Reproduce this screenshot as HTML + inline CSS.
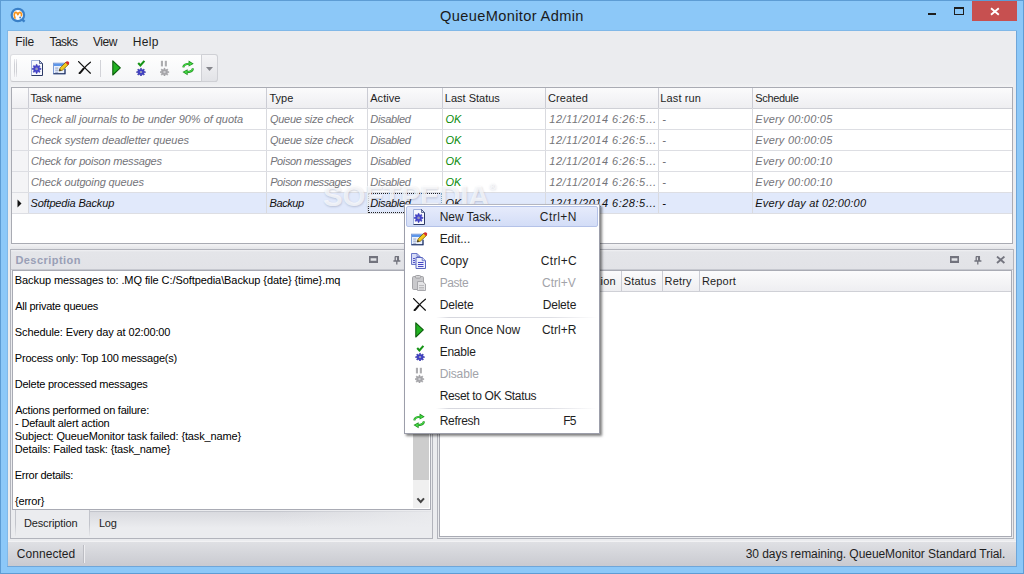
<!DOCTYPE html>
<html><head><meta charset="utf-8"><title>QueueMonitor Admin</title>
<style>
*{box-sizing:border-box;margin:0;padding:0}
html,body{width:1024px;height:574px;overflow:hidden}
body{background:#8cc8f8;font-family:"Liberation Sans",sans-serif;font-size:12px;color:#1e1e1e;position:relative}
.abs{position:absolute}
.t{position:absolute;white-space:nowrap}
.vl{position:absolute;width:1px;background:#d9dadf}
.hl{position:absolute;height:1px;background:#dddee3}
.hdr{background:linear-gradient(#fbfbfc,#eeeef1)}
</style></head><body>
<div class="abs" style="left:0px;top:0px;width:1024px;height:574px;border:1px solid #5d9cd4"></div>
<div class="abs" style="left:8px;top:31px;width:1008px;height:535px;background:#ebecef"></div>
<div class="abs" style="left:1016px;top:31px;width:1px;height:536px;background:#6fa6d9"></div>
<div class="abs" style="left:7px;top:31px;width:1px;height:536px;background:#80b8e8"></div>
<div class="abs" style="left:7px;top:566px;width:1010px;height:1px;background:#6fa6d9"></div>
<div class="abs" style="left:7px;top:30px;width:1010px;height:1px;background:#80b8e8"></div>
<div class="abs" style="left:972px;top:1px;width:45px;height:20px;background:#c75050"></div>
<svg class="abs" style="left:990px;top:7px" width="10" height="9" viewBox="0 0 10 9"><path d="M1,1.2 L8.8,7.8 M8.8,1.2 L1,7.8" stroke="#fff" stroke-width="1.9" fill="none"/></svg>
<div class="abs" style="left:954px;top:7px;width:10px;height:8px;border:1px solid #1e1e1e;border-top-width:2px"></div>
<div class="abs" style="left:928px;top:13px;width:8px;height:2px;background:#1e1e1e"></div>
<svg class="abs" style="left:10px;top:7px" width="17" height="17" viewBox="0 0 17 17"><path d="M11.5,12 L14.6,14.6" stroke="#3a80c8" stroke-width="2.4"/><circle cx="7.9" cy="8" r="6.2" fill="#fdfdfe" stroke="#3a80c8" stroke-width="2.2"/><path d="M5,11 Q3.6,8 4.6,6.2 Q5.6,4.6 7,5.8 L7.9,7.6 L8.8,5.8 Q10.2,4.6 11.2,6.2 Q11.8,7.4 11.4,8.6" stroke="#f7941d" stroke-width="1.7" fill="none" stroke-linecap="round" stroke-linejoin="round"/><circle cx="10.2" cy="10.4" r="1" fill="#3a80c8"/></svg>
<div class="abs" style="left:10px;top:54px;width:208px;height:28px;border:1px solid #dcdde1;border-bottom-color:#c9cace;border-radius:3px;background:linear-gradient(#fefefe,#f5f6f8)"></div>
<div class="abs" style="left:201px;top:54px;width:17px;height:28px;border:1px solid #cfd0d5;border-radius:0 3px 3px 0;background:linear-gradient(#f4f4f6,#e2e3e7)"></div>
<div class="abs" style="left:14px;top:59px;width:1px;height:18px;background:linear-gradient(#e8e8ec,#cfd0d5 30%,#cfd0d5 70%,#e8e8ec)"></div>
<div class="abs" style="left:16px;top:59px;width:1px;height:18px;background:linear-gradient(#e8e8ec,#cfd0d5 30%,#cfd0d5 70%,#e8e8ec)"></div>
<svg class="abs" style="left:31px;top:60px" width="12" height="16" viewBox="0 0 12 16"><path d="M0.5,0.5 H8.5 L11.5,3.5 V15.5 H0.5Z" fill="#f7f9fe"/><path d="M0.5,15.5 V0.5 H8.5" fill="none" stroke="#9fb0dc" stroke-width="1"/><path d="M8.5,0.5 L11.5,3.5 V15.5 H0.5" fill="none" stroke="#2c3a66" stroke-width="1"/><path d="M8.5,0.5 V3.5 H11.5Z" fill="#c9d3ee" stroke="#44527e" stroke-width="0.8"/><path d="M10.08,8.46 L10.08,9.34 L8.47,9.77 L8.25,10.31 L9.08,11.75 L8.45,12.38 L7.01,11.55 L6.47,11.77 L6.04,13.38 L5.16,13.38 L4.73,11.77 L4.19,11.55 L2.75,12.38 L2.12,11.75 L2.95,10.31 L2.73,9.77 L1.12,9.34 L1.12,8.46 L2.73,8.03 L2.95,7.49 L2.12,6.05 L2.75,5.42 L4.19,6.25 L4.73,6.03 L5.16,4.42 L6.04,4.42 L6.47,6.03 L7.01,6.25 L8.45,5.42 L9.08,6.05 L8.25,7.49 L8.47,8.03Z" fill="#4444cf" stroke="#3030a8" stroke-width="0.5"/><circle cx="5.6" cy="8.9" r="1.4" fill="#9a9ab8"/></svg>
<svg class="abs" style="left:53px;top:61px" width="17" height="14" viewBox="0 0 17 14"><rect x="0.5" y="2.2" width="11.5" height="10.6" fill="#eaf1fd" stroke="#7d9bd6" stroke-width="1"/><path d="M0.5,12.8 H12 V8" fill="none" stroke="#1e2c58" stroke-width="1.1"/><rect x="1" y="2.6" width="10.6" height="2.4" fill="#5c96ea"/><rect x="2.2" y="6.6" width="3" height="0.9" fill="#8a9ac0"/><rect x="2.2" y="8.7" width="3" height="0.9" fill="#8a9ac0"/><rect x="2.2" y="10.8" width="3" height="0.9" fill="#8a9ac0"/><path d="M6.1,10 L7.1,6.9 L13,1 L15.6,3.4 L9.4,9.2Z" fill="#f2c81e" stroke="#6e5408" stroke-width="0.7"/><path d="M12.4,1.6 L13.4,0.6 Q14.8,-0.2 15.8,1 Q16.6,2.2 15.8,3 L14.9,3.9Z" fill="#d42c2c"/><path d="M6.1,10 L6.8,8 L8.2,9.3Z" fill="#222"/></svg>
<svg class="abs" style="left:78px;top:60.5px" width="13" height="13" viewBox="0 0 13 13"><path d="M0.6,0.6 Q5,5.2 12.4,12.2" stroke="#111" stroke-width="1.25" fill="none" stroke-linecap="round"/><path d="M12.4,1.2 Q8,4.6 5,8.4" stroke="#111" stroke-width="1.2" fill="none" stroke-linecap="round"/><path d="M5.4,7.8 Q3.4,10.4 1.6,12.2" stroke="#111" stroke-width="2" fill="none" stroke-linecap="round"/></svg>
<div class="abs" style="left:100px;top:60px;width:1px;height:17px;background:#d2d3d8"></div>
<svg class="abs" style="left:112px;top:60px" width="9" height="16" viewBox="0 0 9 16"><path d="M0.8,0.8 L8.3,7.8 L0.8,15Z" fill="#22b322" stroke="#0c5c0c" stroke-width="1.1" stroke-linejoin="round"/></svg>
<svg class="abs" style="left:136px;top:60.4px" width="10" height="16" viewBox="0 0 10 16"><path d="M2.2,3 L4.4,5.4 L8.4,0.9" stroke="#179417" stroke-width="2.1" fill="none"/><g transform="translate(0,12.1) scale(1,0.86) translate(0,-12.1)"><path d="M9.48,11.66 L9.48,12.54 L7.87,12.97 L7.65,13.51 L8.48,14.95 L7.85,15.58 L6.41,14.75 L5.87,14.97 L5.44,16.58 L4.56,16.58 L4.13,14.97 L3.59,14.75 L2.15,15.58 L1.52,14.95 L2.35,13.51 L2.13,12.97 L0.52,12.54 L0.52,11.66 L2.13,11.23 L2.35,10.69 L1.52,9.25 L2.15,8.62 L3.59,9.45 L4.13,9.23 L4.56,7.62 L5.44,7.62 L5.87,9.23 L6.41,9.45 L7.85,8.62 L8.48,9.25 L7.65,10.69 L7.87,11.23Z" fill="#3c3cc6" stroke="#2a2a98" stroke-width="0.5"/><circle cx="5" cy="12.1" r="1.3" fill="#a0a0b8"/></g></svg>
<svg class="abs" style="left:160px;top:60.4px" width="10" height="16" viewBox="0 0 10 16"><rect x="0.9" y="0.8" width="2.1" height="5.6" fill="#adadb0"/><rect x="4.8" y="0.8" width="2.1" height="5.6" fill="#adadb0"/><g transform="translate(0,12.1) scale(1,0.86) translate(0,-12.1)"><path d="M8.98,11.66 L8.98,12.54 L7.37,12.97 L7.15,13.51 L7.98,14.95 L7.35,15.58 L5.91,14.75 L5.37,14.97 L4.94,16.58 L4.06,16.58 L3.63,14.97 L3.09,14.75 L1.65,15.58 L1.02,14.95 L1.85,13.51 L1.63,12.97 L0.02,12.54 L0.02,11.66 L1.63,11.23 L1.85,10.69 L1.02,9.25 L1.65,8.62 L3.09,9.45 L3.63,9.23 L4.06,7.62 L4.94,7.62 L5.37,9.23 L5.91,9.45 L7.35,8.62 L7.98,9.25 L7.15,10.69 L7.37,11.23Z" fill="#a6a6aa" stroke="#97979b" stroke-width="0.5"/><circle cx="4.5" cy="12.1" r="1.3" fill="#cfcfd3"/></g></svg>
<svg class="abs" style="left:182px;top:60px" width="12" height="16" viewBox="0 0 12 16"><path d="M1.3,7.4 Q1.6,3.9 7,3.7" stroke="#1a8a1a" stroke-width="2.1" fill="none"/><path d="M6.6,0.5 L11.7,3.7 L6.6,6.6Z" fill="#1a8a1a"/><path d="M1.5,7 Q1.9,4 7,3.8" stroke="#48e048" stroke-width="1.1" fill="none"/><path d="M7.3,1.9 L10.3,3.7 L7.3,5.4Z" fill="#48e048"/><path d="M10.9,8.4 Q10.6,11.9 5.2,12.1" stroke="#1a8a1a" stroke-width="2.1" fill="none"/><path d="M5.6,9.2 L0.5,12.1 L5.6,15.3Z" fill="#1a8a1a"/><path d="M10.7,8.8 Q10.3,11.8 5.2,12" stroke="#48e048" stroke-width="1.1" fill="none"/><path d="M4.9,10.4 L1.9,12.1 L4.9,13.9Z" fill="#48e048"/></svg>
<svg class="abs" style="left:206px;top:67px" width="8" height="4"><path d="M0,0 H7 L3.5,4Z" fill="#85868c"/></svg>
<div class="abs" style="left:11px;top:83px;width:1002px;height:4px;background:linear-gradient(#ebecef,#f2f2f4)"></div>
<div class="abs" style="left:11px;top:87px;width:1002px;height:157px;border:1px solid #a9abb3;background:#fff"></div>
<div class="abs" style="left:12px;top:88px;width:1000px;height:20px;background:linear-gradient(#fbfbfc,#eeeef1)"></div>
<div class="abs" style="left:12px;top:108px;width:1000px;height:1px;background:#cfd0d6"></div>
<div class="abs" style="left:12px;top:109px;width:16px;height:104px;background:#f4f4f6"></div>
<div class="abs" style="left:29px;top:193px;width:983px;height:20px;background:#e1e9fb"></div>
<div class="abs" style="left:28px;top:88px;width:1px;height:125px;background:#d9dadf"></div>
<div class="abs" style="left:28px;top:88px;width:1px;height:20px;background:#cbccd4"></div>
<div class="abs" style="left:266px;top:88px;width:1px;height:125px;background:#d9dadf"></div>
<div class="abs" style="left:266px;top:88px;width:1px;height:20px;background:#cbccd4"></div>
<div class="abs" style="left:367px;top:88px;width:1px;height:125px;background:#d9dadf"></div>
<div class="abs" style="left:367px;top:88px;width:1px;height:20px;background:#cbccd4"></div>
<div class="abs" style="left:442px;top:88px;width:1px;height:125px;background:#d9dadf"></div>
<div class="abs" style="left:442px;top:88px;width:1px;height:20px;background:#cbccd4"></div>
<div class="abs" style="left:545px;top:88px;width:1px;height:125px;background:#d9dadf"></div>
<div class="abs" style="left:545px;top:88px;width:1px;height:20px;background:#cbccd4"></div>
<div class="abs" style="left:658px;top:88px;width:1px;height:125px;background:#d9dadf"></div>
<div class="abs" style="left:658px;top:88px;width:1px;height:20px;background:#cbccd4"></div>
<div class="abs" style="left:752px;top:88px;width:1px;height:125px;background:#d9dadf"></div>
<div class="abs" style="left:752px;top:88px;width:1px;height:20px;background:#cbccd4"></div>
<div class="abs" style="left:12px;top:129px;width:1000px;height:1px;background:#dddee3"></div>
<div class="abs" style="left:12px;top:150px;width:1000px;height:1px;background:#dddee3"></div>
<div class="abs" style="left:12px;top:171px;width:1000px;height:1px;background:#dddee3"></div>
<div class="abs" style="left:12px;top:192px;width:1000px;height:1px;background:#dddee3"></div>
<div class="abs" style="left:12px;top:213px;width:1000px;height:1px;background:#dddee3"></div>
<svg class="abs" style="left:17px;top:199px" width="5" height="9"><path d="M0.5,0.5 L4.5,4.5 L0.5,8.5Z" fill="#111"/></svg>
<div class="abs" style="left:368px;top:193px;width:74px;height:20px;border:1px dotted #222"></div>
<div class="abs" style="left:11px;top:244px;width:1002px;height:5px;background:linear-gradient(#f3f3f5,#e4e5e8)"></div>
<div class="abs" style="left:10px;top:249px;width:423px;height:290px;border:1px solid #b2b4bc;background:#ebecef"></div>
<div class="abs" style="left:11px;top:250px;width:421px;height:19px;background:linear-gradient(#f0f0f3,#e4e5e9 2px,#e2e3e7)"></div>
<div class="abs" style="left:11px;top:269px;width:421px;height:1px;background:#c6c8cf"></div>
<div class="abs" style="left:12px;top:270px;width:419px;height:240px;border:1px solid #a9abb4;background:#fff"></div>
<div class="abs" style="left:413px;top:271px;width:16px;height:237px;background:#f0f0f0"></div>
<div class="abs" style="left:413px;top:288px;width:16px;height:192px;background:#cdcdcd"></div>
<svg class="abs" style="left:416px;top:497px" width="10" height="8"><path d="M1.4,1.4 L4.7,5 L8,1.4" stroke="#444" stroke-width="2" fill="none"/></svg>
<svg class="abs" style="left:369px;top:256px" width="9" height="7"><path d="M0,0H9V7H0Z M1.6,2.2V4.8H7.4V2.2Z" fill="#72737d" fill-rule="evenodd"/></svg>
<svg class="abs" style="left:393px;top:256px" width="8" height="9"><path d="M2,0.5 H6 M2.2,0.5 V4.8 M5.4,0.5 V4.8 M4.6,0.5 V4.8 M0.4,5 H7.4 M3.8,5 V8.6" stroke="#72737d" stroke-width="1.3" fill="none"/></svg>
<div class="abs" style="left:13px;top:510px;width:418px;height:27px;background:#ebecef"></div>
<div class="abs" style="left:90px;top:511px;width:341px;height:26px;background:linear-gradient(90deg,rgba(235,236,239,0) 55%,rgba(235,236,239,.85) 100%),linear-gradient(#d8d9de,#ebecef 65%)"></div>
<div class="abs" style="left:90px;top:511px;width:341px;height:1px;background:linear-gradient(90deg,#c2c4cb 50%,#e2e3e7)"></div>
<div class="abs" style="left:15px;top:510px;width:1px;height:26px;background:linear-gradient(#c2c4cb 55%,#e6e7ea)"></div>
<div class="abs" style="left:89px;top:510px;width:1px;height:26px;background:linear-gradient(#c2c4cb 55%,#e6e7ea)"></div>
<div class="abs" style="left:437px;top:249px;width:577px;height:290px;border:1px solid #b2b4bc;background:#ebecef"></div>
<div class="abs" style="left:438px;top:250px;width:575px;height:19px;background:linear-gradient(#f0f0f3,#e4e5e9 2px,#e2e3e7)"></div>
<div class="abs" style="left:438px;top:269px;width:575px;height:1px;background:#c6c8cf"></div>
<div class="abs" style="left:439px;top:270px;width:573px;height:267px;border:1px solid #a9abb4;background:#fff"></div>
<div class="abs" style="left:440px;top:271px;width:571px;height:20px;background:linear-gradient(#fbfbfc,#eeeef1)"></div>
<div class="abs" style="left:440px;top:291px;width:571px;height:1px;background:#cfd0d6"></div>
<div class="abs" style="left:621px;top:271px;width:1px;height:20px;background:#cbccd4"></div>
<div class="abs" style="left:662px;top:271px;width:1px;height:20px;background:#cbccd4"></div>
<div class="abs" style="left:699px;top:271px;width:1px;height:20px;background:#cbccd4"></div>
<svg class="abs" style="left:950px;top:256px" width="9" height="7"><path d="M0,0H9V7H0Z M1.6,2.2V4.8H7.4V2.2Z" fill="#72737d" fill-rule="evenodd"/></svg>
<svg class="abs" style="left:974px;top:256px" width="8" height="9"><path d="M2,0.5 H6 M2.2,0.5 V4.8 M5.4,0.5 V4.8 M4.6,0.5 V4.8 M0.4,5 H7.4 M3.8,5 V8.6" stroke="#72737d" stroke-width="1.3" fill="none"/></svg>
<svg class="abs" style="left:996px;top:256px" width="10" height="8"><path d="M1,0.6 L8.4,7 M8.4,0.6 L1,7" stroke="#74757f" stroke-width="1.9" fill="none"/></svg>
<div class="abs" style="left:8px;top:541px;width:1008px;height:25px;background:linear-gradient(#dfe0e4,#c9cad0);border-top:1px solid #f2f2f4"></div>
<div class="abs" style="left:83px;top:545px;width:1px;height:18px;background:#bcbdc3"></div>
<div class="abs" style="left:84px;top:545px;width:1px;height:18px;background:#eeeef1"></div>
<div class="abs" style="left:323px;top:181px;font-size:29.5px;line-height:30px;font-weight:bold;letter-spacing:-0.3px;color:rgba(255,255,255,.72);text-shadow:0.5px 1px 2px rgba(100,110,140,.32);white-space:nowrap">SOFTPEDIA<span style="font-size:9px;vertical-align:top;line-height:12px">&reg;</span></div>
<div class="t" style="left:440.01px;top:8.84px;font-size:14.6px;line-height:14.6px;letter-spacing:0.373px;color:#1a1a1a">QueueMonitor Admin</div>
<div class="t" style="left:15.34px;top:35.84px;font-size:12px;line-height:12px;letter-spacing:-0.132px;">File</div>
<div class="t" style="left:49.48px;top:35.84px;font-size:12px;line-height:12px;letter-spacing:-0.514px;">Tasks</div>
<div class="t" style="left:93.01px;top:35.84px;font-size:12px;line-height:12px;letter-spacing:-0.437px;">View</div>
<div class="t" style="left:132.70px;top:35.84px;font-size:12px;line-height:12px;letter-spacing:0.347px;">Help</div>
<div class="t" style="left:30.41px;top:92.69px;font-size:11px;line-height:11px;letter-spacing:-0.251px;">Task name</div>
<div class="t" style="left:269.40px;top:92.69px;font-size:11px;line-height:11px;letter-spacing:0.030px;">Type</div>
<div class="t" style="left:370.24px;top:92.69px;font-size:11px;line-height:11px;letter-spacing:0.046px;">Active</div>
<div class="t" style="left:444.80px;top:92.69px;font-size:11px;line-height:11px;letter-spacing:-0.000px;">Last Status</div>
<div class="t" style="left:547.91px;top:92.69px;font-size:11px;line-height:11px;letter-spacing:0.149px;">Created</div>
<div class="t" style="left:660.36px;top:92.69px;font-size:11px;line-height:11px;letter-spacing:0.117px;">Last run</div>
<div class="t" style="left:755.21px;top:92.69px;font-size:11px;line-height:11px;letter-spacing:-0.332px;">Schedule</div>
<div class="t" style="left:30.99px;top:113.69px;font-size:11px;line-height:11px;letter-spacing:-0.029px;color:#747479;font-style:italic">Check all journals to be under 90% of quota</div>
<div class="t" style="left:269.88px;top:113.69px;font-size:11px;line-height:11px;letter-spacing:-0.231px;color:#747479;font-style:italic">Queue size check</div>
<div class="t" style="left:370.25px;top:113.69px;font-size:11px;line-height:11px;letter-spacing:-0.315px;color:#747479;font-style:italic">Disabled</div>
<div class="t" style="left:445.60px;top:113.69px;font-size:11px;line-height:11px;letter-spacing:-0.106px;color:#0a8a0a;font-style:italic">OK</div>
<div class="t" style="left:549.35px;top:113.69px;font-size:11px;line-height:11px;letter-spacing:0.491px;color:#747479;font-style:italic">12/11/2014 6:26:5…</div>
<div class="t" style="left:662.16px;top:113.69px;font-size:11px;line-height:11px;letter-spacing:0.000px;color:#747479;font-style:italic">-</div>
<div class="t" style="left:755.33px;top:113.69px;font-size:11px;line-height:11px;letter-spacing:0.231px;color:#747479;font-style:italic">Every 00:00:05</div>
<div class="t" style="left:30.99px;top:134.69px;font-size:11px;line-height:11px;letter-spacing:-0.078px;color:#747479;font-style:italic">Check system deadletter queues</div>
<div class="t" style="left:269.88px;top:134.69px;font-size:11px;line-height:11px;letter-spacing:-0.231px;color:#747479;font-style:italic">Queue size check</div>
<div class="t" style="left:370.25px;top:134.69px;font-size:11px;line-height:11px;letter-spacing:-0.315px;color:#747479;font-style:italic">Disabled</div>
<div class="t" style="left:445.60px;top:134.69px;font-size:11px;line-height:11px;letter-spacing:-0.106px;color:#0a8a0a;font-style:italic">OK</div>
<div class="t" style="left:549.35px;top:134.69px;font-size:11px;line-height:11px;letter-spacing:0.491px;color:#747479;font-style:italic">12/11/2014 6:26:5…</div>
<div class="t" style="left:662.16px;top:134.69px;font-size:11px;line-height:11px;letter-spacing:0.000px;color:#747479;font-style:italic">-</div>
<div class="t" style="left:755.33px;top:134.69px;font-size:11px;line-height:11px;letter-spacing:0.231px;color:#747479;font-style:italic">Every 00:00:05</div>
<div class="t" style="left:30.99px;top:155.69px;font-size:11px;line-height:11px;letter-spacing:-0.198px;color:#747479;font-style:italic">Check for poison messages</div>
<div class="t" style="left:270.16px;top:155.69px;font-size:11px;line-height:11px;letter-spacing:-0.391px;color:#747479;font-style:italic">Poison messages</div>
<div class="t" style="left:370.25px;top:155.69px;font-size:11px;line-height:11px;letter-spacing:-0.315px;color:#747479;font-style:italic">Disabled</div>
<div class="t" style="left:445.60px;top:155.69px;font-size:11px;line-height:11px;letter-spacing:-0.106px;color:#0a8a0a;font-style:italic">OK</div>
<div class="t" style="left:549.35px;top:155.69px;font-size:11px;line-height:11px;letter-spacing:0.491px;color:#747479;font-style:italic">12/11/2014 6:26:5…</div>
<div class="t" style="left:662.16px;top:155.69px;font-size:11px;line-height:11px;letter-spacing:0.000px;color:#747479;font-style:italic">-</div>
<div class="t" style="left:755.33px;top:155.69px;font-size:11px;line-height:11px;letter-spacing:0.214px;color:#747479;font-style:italic">Every 00:00:10</div>
<div class="t" style="left:30.99px;top:176.69px;font-size:11px;line-height:11px;letter-spacing:-0.126px;color:#747479;font-style:italic">Check outgoing queues</div>
<div class="t" style="left:270.16px;top:176.69px;font-size:11px;line-height:11px;letter-spacing:-0.391px;color:#747479;font-style:italic">Poison messages</div>
<div class="t" style="left:370.25px;top:176.69px;font-size:11px;line-height:11px;letter-spacing:-0.315px;color:#747479;font-style:italic">Disabled</div>
<div class="t" style="left:445.60px;top:176.69px;font-size:11px;line-height:11px;letter-spacing:-0.106px;color:#0a8a0a;font-style:italic">OK</div>
<div class="t" style="left:549.35px;top:176.69px;font-size:11px;line-height:11px;letter-spacing:0.491px;color:#747479;font-style:italic">12/11/2014 6:26:5…</div>
<div class="t" style="left:662.16px;top:176.69px;font-size:11px;line-height:11px;letter-spacing:0.000px;color:#747479;font-style:italic">-</div>
<div class="t" style="left:755.33px;top:176.69px;font-size:11px;line-height:11px;letter-spacing:0.214px;color:#747479;font-style:italic">Every 00:00:10</div>
<div class="t" style="left:30.48px;top:197.69px;font-size:11px;line-height:11px;letter-spacing:-0.161px;color:#111;font-style:italic">Softpedia Backup</div>
<div class="t" style="left:269.62px;top:197.69px;font-size:11px;line-height:11px;letter-spacing:-0.424px;color:#111;font-style:italic">Backup</div>
<div class="t" style="left:370.25px;top:197.69px;font-size:11px;line-height:11px;letter-spacing:-0.315px;color:#111;font-style:italic">Disabled</div>
<div class="t" style="left:445.60px;top:197.69px;font-size:11px;line-height:11px;letter-spacing:-0.106px;color:#111;font-style:italic">OK</div>
<div class="t" style="left:549.35px;top:197.69px;font-size:11px;line-height:11px;letter-spacing:0.491px;color:#111;font-style:italic">12/11/2014 6:28:5…</div>
<div class="t" style="left:662.16px;top:197.69px;font-size:11px;line-height:11px;letter-spacing:0.000px;color:#111;font-style:italic">-</div>
<div class="t" style="left:755.33px;top:197.69px;font-size:11px;line-height:11px;letter-spacing:0.184px;color:#111;font-style:italic">Every day at 02:00:00</div>
<div class="t" style="left:15.41px;top:254.69px;font-size:11px;line-height:11px;letter-spacing:0.449px;font-weight:bold;color:#999fb6">Description</div>
<div class="t" style="left:14.81px;top:274.69px;font-size:11px;line-height:11px;letter-spacing:-0.082px;color:#000">Backup messages to: .MQ file C:/Softpedia\Backup {date} {time}.mq</div>
<div class="t" style="left:15.24px;top:300.69px;font-size:11px;line-height:11px;letter-spacing:-0.256px;color:#000">All private queues</div>
<div class="t" style="left:14.80px;top:326.69px;font-size:11px;line-height:11px;letter-spacing:-0.111px;color:#000">Schedule: Every day at 02:00:00</div>
<div class="t" style="left:14.81px;top:352.69px;font-size:11px;line-height:11px;letter-spacing:-0.196px;color:#000">Process only: Top 100 message(s)</div>
<div class="t" style="left:14.80px;top:378.69px;font-size:11px;line-height:11px;letter-spacing:-0.243px;color:#000">Delete processed messages</div>
<div class="t" style="left:15.24px;top:404.69px;font-size:11px;line-height:11px;letter-spacing:-0.237px;color:#000">Actions performed on failure:</div>
<div class="t" style="left:15.03px;top:417.69px;font-size:11px;line-height:11px;letter-spacing:-0.177px;color:#000">- Default alert action</div>
<div class="t" style="left:14.80px;top:430.69px;font-size:11px;line-height:11px;letter-spacing:-0.132px;color:#000">Subject: QueueMonitor task failed: {task_name}</div>
<div class="t" style="left:14.80px;top:443.69px;font-size:11px;line-height:11px;letter-spacing:-0.145px;color:#000">Details: Failed task: {task_name}</div>
<div class="t" style="left:14.81px;top:469.69px;font-size:11px;line-height:11px;letter-spacing:-0.295px;color:#000">Error details:</div>
<div class="t" style="left:15.09px;top:495.69px;font-size:11px;line-height:11px;letter-spacing:-0.220px;color:#000">{error}</div>
<div class="t" style="left:23.91px;top:517.69px;font-size:11px;line-height:11px;letter-spacing:-0.125px;">Description</div>
<div class="t" style="left:98.91px;top:517.69px;font-size:11px;line-height:11px;letter-spacing:-0.225px;">Log</div>
<div class="t" style="left:597.10px;top:275.69px;font-size:11px;line-height:11px;letter-spacing:0.273px;">tion</div>
<div class="t" style="left:623.80px;top:275.69px;font-size:11px;line-height:11px;letter-spacing:0.185px;">Status</div>
<div class="t" style="left:664.59px;top:275.69px;font-size:11px;line-height:11px;letter-spacing:0.186px;">Retry</div>
<div class="t" style="left:701.88px;top:275.69px;font-size:11px;line-height:11px;letter-spacing:0.180px;">Report</div>
<div class="t" style="left:16.86px;top:547.64px;font-size:12px;line-height:12px;letter-spacing:0.037px;">Connected</div>
<div class="t" style="left:745.69px;top:547.64px;font-size:12px;line-height:12px;letter-spacing:-0.055px;">30 days remaining. QueueMonitor Standard Trial.</div>
<div class="abs" style="left:404px;top:204px;width:196px;height:230px;background:#fff;border:1px solid #9c9eaa;border-top-color:#b4b6c0;box-shadow:2px 2px 2.5px rgba(0,0,0,.5)"></div>
<div class="abs" style="left:406px;top:206px;width:192px;height:21px;background:linear-gradient(#e6ebfb,#d3ddf7);border:1px solid #b4c2e8;border-radius:2px"></div>
<div class="abs" style="left:436px;top:317px;width:162px;height:1px;background:linear-gradient(90deg,#fff,#d6d7de 8%,#dcdde3 70%,#fff)"></div>
<div class="abs" style="left:436px;top:408px;width:162px;height:1px;background:linear-gradient(90deg,#fff,#d6d7de 8%,#dcdde3 70%,#fff)"></div>
<svg class="abs" style="left:413px;top:209px" width="12" height="16" viewBox="0 0 12 16"><path d="M0.5,0.5 H8.5 L11.5,3.5 V15.5 H0.5Z" fill="#f7f9fe"/><path d="M0.5,15.5 V0.5 H8.5" fill="none" stroke="#9fb0dc" stroke-width="1"/><path d="M8.5,0.5 L11.5,3.5 V15.5 H0.5" fill="none" stroke="#2c3a66" stroke-width="1"/><path d="M8.5,0.5 V3.5 H11.5Z" fill="#c9d3ee" stroke="#44527e" stroke-width="0.8"/><path d="M10.08,8.46 L10.08,9.34 L8.47,9.77 L8.25,10.31 L9.08,11.75 L8.45,12.38 L7.01,11.55 L6.47,11.77 L6.04,13.38 L5.16,13.38 L4.73,11.77 L4.19,11.55 L2.75,12.38 L2.12,11.75 L2.95,10.31 L2.73,9.77 L1.12,9.34 L1.12,8.46 L2.73,8.03 L2.95,7.49 L2.12,6.05 L2.75,5.42 L4.19,6.25 L4.73,6.03 L5.16,4.42 L6.04,4.42 L6.47,6.03 L7.01,6.25 L8.45,5.42 L9.08,6.05 L8.25,7.49 L8.47,8.03Z" fill="#4444cf" stroke="#3030a8" stroke-width="0.5"/><circle cx="5.6" cy="8.9" r="1.4" fill="#9a9ab8"/></svg>
<svg class="abs" style="left:411px;top:232px" width="17" height="14" viewBox="0 0 17 14"><rect x="0.5" y="2.2" width="11.5" height="10.6" fill="#eaf1fd" stroke="#7d9bd6" stroke-width="1"/><path d="M0.5,12.8 H12 V8" fill="none" stroke="#1e2c58" stroke-width="1.1"/><rect x="1" y="2.6" width="10.6" height="2.4" fill="#5c96ea"/><rect x="2.2" y="6.6" width="3" height="0.9" fill="#8a9ac0"/><rect x="2.2" y="8.7" width="3" height="0.9" fill="#8a9ac0"/><rect x="2.2" y="10.8" width="3" height="0.9" fill="#8a9ac0"/><path d="M6.1,10 L7.1,6.9 L13,1 L15.6,3.4 L9.4,9.2Z" fill="#f2c81e" stroke="#6e5408" stroke-width="0.7"/><path d="M12.4,1.6 L13.4,0.6 Q14.8,-0.2 15.8,1 Q16.6,2.2 15.8,3 L14.9,3.9Z" fill="#d42c2c"/><path d="M6.1,10 L6.8,8 L8.2,9.3Z" fill="#222"/></svg>
<svg class="abs" style="left:411px;top:253px" width="15" height="16" viewBox="0 0 15 16"><path d="M0.5,0.5 H6 L9,3.5 V11.5 H0.5Z" fill="#d6dcf7" stroke="#6a76c8"/><path d="M6,0.5 V3.5 H9" fill="none" stroke="#6a76c8" stroke-width="0.8"/><path d="M5,4.5 H11.2 L14.5,7.7 V15.5 H5Z" fill="#eef1fd" stroke="#5a66c0"/><path d="M11.2,4.5 V7.7 H14.5" fill="#cfd6f4" stroke="#5a66c0" stroke-width="0.8"/><path d="M7,9.5H12.5M7,11.5H12.5M7,13.5H12.5" stroke="#4646c4" stroke-width="1"/><path d="M2,5.5H4M2,7.5H4M2,9.5H4" stroke="#5656c8" stroke-width="1"/></svg>
<svg class="abs" style="left:412px;top:275px" width="14" height="16" viewBox="0 0 14 16"><rect x="0.5" y="1.5" width="11" height="13" rx="1.2" fill="#c9c9cc" stroke="#a4a4a8"/><rect x="3.5" y="0.5" width="5" height="2.6" rx="0.8" fill="#d8d8da" stroke="#a0a0a4"/><path d="M5.5,6.5 H10.5 L13.5,9 V15.5 H5.5Z" fill="#e4e4e6" stroke="#a8a8ac"/><path d="M7,10.5H12M7,12.5H12M7,14H12" stroke="#b0b0b4" stroke-width="0.8"/></svg>
<svg class="abs" style="left:413px;top:298px" width="13" height="13" viewBox="0 0 13 13"><path d="M0.6,0.6 Q5,5.2 12.4,12.2" stroke="#111" stroke-width="1.25" fill="none" stroke-linecap="round"/><path d="M12.4,1.2 Q8,4.6 5,8.4" stroke="#111" stroke-width="1.2" fill="none" stroke-linecap="round"/><path d="M5.4,7.8 Q3.4,10.4 1.6,12.2" stroke="#111" stroke-width="2" fill="none" stroke-linecap="round"/></svg>
<svg class="abs" style="left:415px;top:322px" width="9" height="16" viewBox="0 0 9 16"><path d="M0.8,0.8 L8.3,7.8 L0.8,15Z" fill="#22b322" stroke="#0c5c0c" stroke-width="1.1" stroke-linejoin="round"/></svg>
<svg class="abs" style="left:415px;top:345px" width="10" height="16" viewBox="0 0 10 16"><path d="M2.2,3 L4.4,5.4 L8.4,0.9" stroke="#179417" stroke-width="2.1" fill="none"/><g transform="translate(0,12.1) scale(1,0.86) translate(0,-12.1)"><path d="M9.48,11.66 L9.48,12.54 L7.87,12.97 L7.65,13.51 L8.48,14.95 L7.85,15.58 L6.41,14.75 L5.87,14.97 L5.44,16.58 L4.56,16.58 L4.13,14.97 L3.59,14.75 L2.15,15.58 L1.52,14.95 L2.35,13.51 L2.13,12.97 L0.52,12.54 L0.52,11.66 L2.13,11.23 L2.35,10.69 L1.52,9.25 L2.15,8.62 L3.59,9.45 L4.13,9.23 L4.56,7.62 L5.44,7.62 L5.87,9.23 L6.41,9.45 L7.85,8.62 L8.48,9.25 L7.65,10.69 L7.87,11.23Z" fill="#3c3cc6" stroke="#2a2a98" stroke-width="0.5"/><circle cx="5" cy="12.1" r="1.3" fill="#a0a0b8"/></g></svg>
<svg class="abs" style="left:415px;top:367px" width="10" height="16" viewBox="0 0 10 16"><rect x="0.9" y="0.8" width="2.1" height="5.6" fill="#adadb0"/><rect x="4.8" y="0.8" width="2.1" height="5.6" fill="#adadb0"/><g transform="translate(0,12.1) scale(1,0.86) translate(0,-12.1)"><path d="M8.98,11.66 L8.98,12.54 L7.37,12.97 L7.15,13.51 L7.98,14.95 L7.35,15.58 L5.91,14.75 L5.37,14.97 L4.94,16.58 L4.06,16.58 L3.63,14.97 L3.09,14.75 L1.65,15.58 L1.02,14.95 L1.85,13.51 L1.63,12.97 L0.02,12.54 L0.02,11.66 L1.63,11.23 L1.85,10.69 L1.02,9.25 L1.65,8.62 L3.09,9.45 L3.63,9.23 L4.06,7.62 L4.94,7.62 L5.37,9.23 L5.91,9.45 L7.35,8.62 L7.98,9.25 L7.15,10.69 L7.37,11.23Z" fill="#a6a6aa" stroke="#97979b" stroke-width="0.5"/><circle cx="4.5" cy="12.1" r="1.3" fill="#cfcfd3"/></g></svg>
<svg class="abs" style="left:413px;top:413px" width="12" height="16" viewBox="0 0 12 16"><path d="M1.3,7.4 Q1.6,3.9 7,3.7" stroke="#1a8a1a" stroke-width="2.1" fill="none"/><path d="M6.6,0.5 L11.7,3.7 L6.6,6.6Z" fill="#1a8a1a"/><path d="M1.5,7 Q1.9,4 7,3.8" stroke="#48e048" stroke-width="1.1" fill="none"/><path d="M7.3,1.9 L10.3,3.7 L7.3,5.4Z" fill="#48e048"/><path d="M10.9,8.4 Q10.6,11.9 5.2,12.1" stroke="#1a8a1a" stroke-width="2.1" fill="none"/><path d="M5.6,9.2 L0.5,12.1 L5.6,15.3Z" fill="#1a8a1a"/><path d="M10.7,8.8 Q10.3,11.8 5.2,12" stroke="#48e048" stroke-width="1.1" fill="none"/><path d="M4.9,10.4 L1.9,12.1 L4.9,13.9Z" fill="#48e048"/></svg>
<div class="t" style="left:439.64px;top:210.84px;font-size:12px;line-height:12px;letter-spacing:-0.044px;">New Task...</div>
<div class="t" style="left:539.82px;top:210.84px;font-size:12px;line-height:12px;letter-spacing:0.454px;">Ctrl+N</div>
<div class="t" style="left:439.64px;top:232.84px;font-size:12px;line-height:12px;letter-spacing:-0.013px;">Edit...</div>
<div class="t" style="left:440.17px;top:254.84px;font-size:12px;line-height:12px;letter-spacing:0.027px;">Copy</div>
<div class="t" style="left:540.77px;top:254.84px;font-size:12px;line-height:12px;letter-spacing:0.331px;">Ctrl+C</div>
<div class="t" style="left:439.64px;top:276.84px;font-size:12px;line-height:12px;letter-spacing:-0.404px;color:#a2a3a9">Paste</div>
<div class="t" style="left:541.93px;top:276.84px;font-size:12px;line-height:12px;letter-spacing:0.053px;color:#a2a3a9">Ctrl+V</div>
<div class="t" style="left:439.64px;top:298.84px;font-size:12px;line-height:12px;letter-spacing:-0.152px;">Delete</div>
<div class="t" style="left:542.71px;top:298.84px;font-size:12px;line-height:12px;letter-spacing:-0.203px;">Delete</div>
<div class="t" style="left:439.64px;top:323.84px;font-size:12px;line-height:12px;letter-spacing:-0.072px;">Run Once Now</div>
<div class="t" style="left:541.89px;top:323.84px;font-size:12px;line-height:12px;letter-spacing:0.042px;">Ctrl+R</div>
<div class="t" style="left:439.64px;top:345.84px;font-size:12px;line-height:12px;letter-spacing:-0.236px;">Enable</div>
<div class="t" style="left:439.64px;top:367.84px;font-size:12px;line-height:12px;letter-spacing:-0.119px;color:#a2a3a9">Disable</div>
<div class="t" style="left:439.64px;top:389.84px;font-size:12px;line-height:12px;letter-spacing:-0.345px;">Reset to OK Status</div>
<div class="t" style="left:439.64px;top:414.84px;font-size:12px;line-height:12px;letter-spacing:-0.276px;">Refresh</div>
<div class="t" style="left:563.24px;top:414.84px;font-size:12px;line-height:12px;letter-spacing:-0.850px;">F5</div>
</body></html>
